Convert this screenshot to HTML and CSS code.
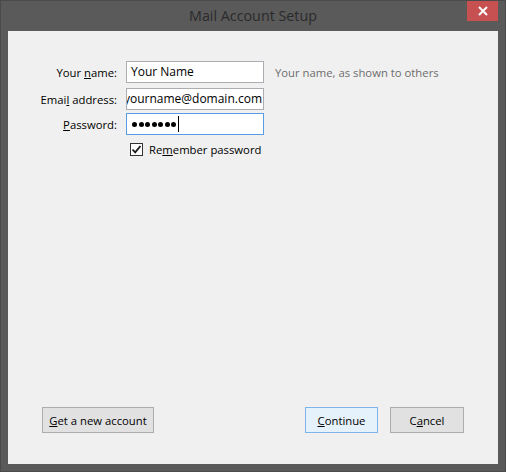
FILE: index.html
```html
<!DOCTYPE html>
<html>
<head>
<meta charset="utf-8">
<link rel="stylesheet" href="styles.css">
</head>
<body>
<div class="window">
  <div class="titlebar">
    <div class="title">Mail Account Setup</div>
    <div class="close">
      <svg width="10" height="10" viewBox="0 0 10 10"><path d="M1 1L9 9M9 1L1 9" stroke="#fff" stroke-width="2"/></svg>
    </div>
  </div>
  <div class="client">
    <div class="form">
      <label class="lbl">Your <u>n</u>ame:</label>
      <div class="field"><span class="val">Your Name</span></div>
      <div class="hint">Your name, as shown to others</div>

      <label class="lbl row2">Emai<u>l</u> address:</label>
      <div class="field row2 end"><span class="val">yourname@domain.com</span></div>
      <div class="row2"></div>

      <label class="lbl row3"><u>P</u>assword:</label>
      <div class="field focus row3"><span class="dots"><i></i><i></i><i></i><i></i><i></i><i></i><i></i></span><span class="caret"></span></div>
      <div class="row3"></div>

      <div></div>
      <div class="check-row">
        <span class="checkbox">
          <svg width="11" height="11" viewBox="0 0 11 11"><path d="M1.5 5.5L4.2 8.3L9.5 2" fill="none" stroke="#1a1a1a" stroke-width="1.8"/></svg>
        </span>
        <span class="check-label">Re<u>m</u>ember password</span>
      </div>
      <div></div>
    </div>
    <div class="spacer"></div>
    <div class="buttons">
      <button class="btn wide"><u>G</u>et a new account</button>
      <div class="right">
        <button class="btn default"><u>C</u>ontinue</button>
        <button class="btn">C<u>a</u>ncel</button>
      </div>
    </div>
  </div>
</div>
</body>
</html>
```
FILE: styles.css
```css
html, body {
  margin: 0;
  padding: 0;
}
body {
  width: 506px;
  height: 472px;
  background: #595959;
  font-family: "Open Sans", "Noto Sans", sans-serif;
  font-size: 11.3px;
  color: #000;
}
.window {
  width: 506px;
  height: 472px;
  box-sizing: border-box;
  border: 1px solid #4a4a4a;
  background: #5a5a5a;
  padding: 0 7px 7px 7px;
  display: flex;
  flex-direction: column;
}
.titlebar {
  height: 30px;
  position: relative;
  display: flex;
  align-items: center;
  justify-content: center;
}
.title {
  font-size: 14.3px;
  color: #2a2a2a;
  margin-top: -1px;
}
.close {
  position: absolute;
  right: 0;
  top: 0;
  width: 31px;
  height: 20px;
  background: #c75050;
  display: flex;
  align-items: center;
  justify-content: center;
}
.client {
  flex: 1;
  background: #f0f0f0;
  display: flex;
  flex-direction: column;
  padding: 30px 34px 31px 0;
}
.form {
  display: grid;
  grid-template-columns: 109px 138px auto;
  column-gap: 9px;
  align-items: center;
}
.form > :nth-child(3n) {
  margin-left: 2px;
}
.row2 {
  margin-top: 5px;
}
.row3 {
  margin-top: 3px;
}
.lbl {
  text-align: right;
  white-space: nowrap;
}
.field {
  height: 22px;
  box-sizing: border-box;
  border: 1px solid #abadb3;
  background: #fff;
  overflow: hidden;
  white-space: nowrap;
  display: flex;
  align-items: center;
  padding-left: 4px;
}
.field.end {
  justify-content: flex-end;
  padding-left: 0;
  padding-right: 1px;
}
.field.focus {
  border-color: #569de5;
}
.val {
  font-size: 12px;
  line-height: 16px;
  flex-shrink: 0;
}
.dots {
  display: flex;
  gap: 1.5px;
  margin-left: 1px;
}
.dots i {
  display: block;
  width: 5px;
  height: 5px;
  border-radius: 50%;
  background: #000;
}
.caret {
  display: inline-block;
  width: 1px;
  height: 16px;
  background: #000;
  margin-left: 2px;
}
.hint {
  color: #6d6d6d;
  white-space: nowrap;
}
.check-row {
  display: flex;
  align-items: center;
  padding-left: 4px;
  height: 22px;
  margin-top: 3px;
}
.checkbox {
  width: 13px;
  height: 13px;
  box-sizing: border-box;
  border: 1px solid #333;
  background: #fff;
  display: flex;
  align-items: center;
  justify-content: center;
  margin-right: 6px;
}
.check-label {
  white-space: nowrap;
}
.spacer {
  flex: 1;
}
.buttons {
  display: flex;
  justify-content: space-between;
  align-items: center;
  padding-left: 34px;
}
.right {
  display: flex;
  gap: 12px;
}
.btn {
  font-family: "Open Sans", "Noto Sans", sans-serif;
  font-size: 11.3px;
  color: #000;
  height: 26px;
  width: 74px;
  box-sizing: border-box;
  padding: 0;
  border: 1px solid #adadad;
  background: #e1e1e1;
  white-space: nowrap;
}
.btn.wide {
  width: 112px;
}
.btn.default {
  background: #e5f1fb;
  border-color: #7eb4ea;
  width: 73px;
}
```
